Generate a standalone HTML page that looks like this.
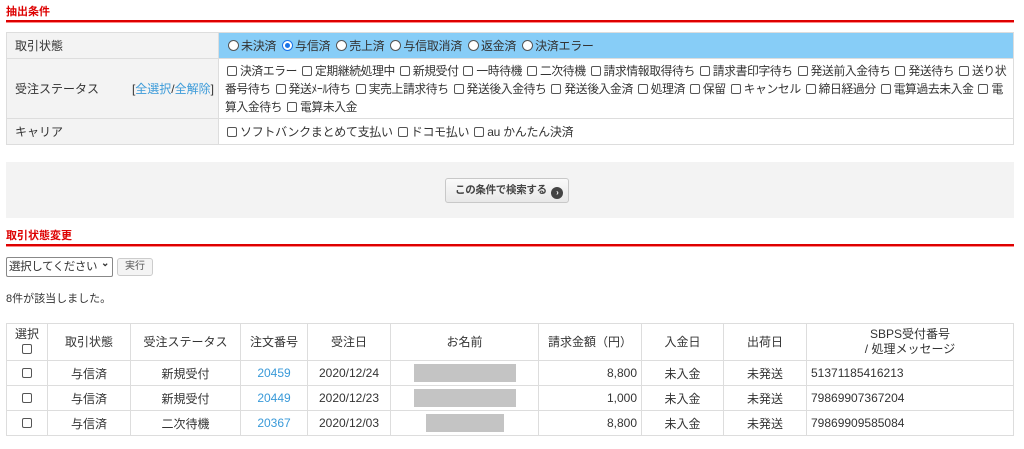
<!DOCTYPE html>
<html><head><meta charset="utf-8"><style>
*{box-sizing:border-box;margin:0;padding:0}
body{width:1024px;height:449px;background:#fff;font-family:"Liberation Sans","Noto Sans CJK JP",sans-serif;font-size:12px;color:#333;position:relative;overflow:hidden}
.abs{position:absolute}
.ttl{color:#d00;font-weight:bold;font-size:11px}
.rl{height:3px;background:#d00;left:6px;width:1008px;border-bottom:1px solid #f88}
table{border-collapse:collapse}
.f td{border:1px solid #ddd;vertical-align:middle;padding:0 6px;line-height:18px}
.f td.l{background:#f3f3f3;padding-left:8px}
.cb{display:inline-block;width:10px;height:10px;border:1px solid #555;border-radius:2px;margin:0 3px 0 2px;vertical-align:-1px;background:#fff}
.rd{display:inline-block;width:11px;height:11px;border:1px solid #555;border-radius:50%;margin:0 2px 0 3px;vertical-align:-1px;background:#fff;position:relative}
.rd.on{border-color:#1a73e8}
.rd.on:after{content:"";position:absolute;left:2px;top:2px;width:5px;height:5px;border-radius:50%;background:#1a73e8}
a{color:#3a9ad9;text-decoration:none}
.r td,.r th{border:1px solid #ddd;text-align:center;font-weight:normal;height:25px;padding:0 4px}
.r th{height:37px;line-height:15px}
.gr{display:inline-block;background:#c4c4c4;height:18px;vertical-align:middle}
.st{font-size:11.8px;letter-spacing:-0.38px;line-break:anywhere}
</style></head><body>
<div class="abs ttl" style="left:6px;top:3px">抽出条件</div>
<div class="abs rl" style="top:20px"></div>
<table class="f abs" style="left:6px;top:32px;width:1008px">
<tr style="height:26px"><td class="l" style="width:212px">取引状態</td><td style="background:#87cdf7;letter-spacing:-0.3px"><span class="rd"></span>未決済 <span class="rd on"></span>与信済 <span class="rd"></span>売上済 <span class="rd"></span>与信取消済 <span class="rd"></span>返金済 <span class="rd"></span>決済エラー</td></tr>
<tr style="height:60px"><td class="l">受注ステータス<span style="float:right;margin-right:-2px">[<a>全選択</a>/<a>全解除</a>]</span></td><td class="st"><span class="cb"></span>決済エラー <span class="cb"></span>定期継続処理中 <span class="cb"></span>新規受付 <span class="cb"></span>一時待機 <span class="cb"></span>二次待機 <span class="cb"></span>請求情報取得待ち <span class="cb"></span>請求書印字待ち <span class="cb"></span>発送前入金待ち <span class="cb"></span>発送待ち <span class="cb"></span>送り状番号待ち <span class="cb"></span>発送ﾒｰﾙ待ち <span class="cb"></span>実売上請求待ち <span class="cb"></span>発送後入金待ち <span class="cb"></span>発送後入金済 <span class="cb"></span>処理済 <span class="cb"></span>保留 <span class="cb"></span>キャンセル <span class="cb"></span>締日経過分 <span class="cb"></span>電算過去未入金 <span class="cb"></span>電算入金待ち <span class="cb"></span>電算未入金</td></tr>
<tr style="height:26px"><td class="l">キャリア</td><td style="letter-spacing:-0.3px"><span class="cb"></span>ソフトバンクまとめて支払い <span class="cb"></span>ドコモ払い <span class="cb"></span>au かんたん決済</td></tr>
</table>
<div class="abs" style="left:6px;top:162px;width:1008px;height:56px;background:#f3f3f3"></div>
<div class="abs" style="left:445px;top:178px;width:124px;height:25px;border:1px solid #c8c8c8;border-radius:3px;background:linear-gradient(#fafafa,#e8e8e8);font-size:10.5px;font-weight:bold;color:#444;line-height:23px;padding-left:9px;white-space:nowrap;letter-spacing:-0.3px">この条件で検索する <span style="display:inline-block;width:12px;height:12px;border-radius:50%;background:#444;color:#fff;font-size:8px;line-height:12px;text-align:center;vertical-align:-2px;margin-left:2px;letter-spacing:0">›</span></div>
<div class="abs ttl" style="left:6px;top:227px">取引状態変更</div>
<div class="abs rl" style="top:244px"></div>
<div class="abs" style="left:6px;top:257px;width:107px;height:20px;border:1px solid #888;border-radius:2px;line-height:18px;padding-left:2px;font-size:11.5px;white-space:nowrap;overflow:hidden;letter-spacing:-0.4px">選択してください<span style="position:absolute;right:3px;top:-3px;font-size:10px;font-weight:bold">&#x2304;</span></div>
<div class="abs" style="left:117px;top:258px;width:36px;height:18px;border:1px solid #ccc;border-radius:3px;background:#f4f4f4;font-size:10px;color:#555;text-align:center;line-height:16px">実行</div>
<div class="abs" style="left:6px;top:290px;font-size:11px">8件が該当しました。</div>
<table class="r abs" style="left:6px;top:323px;width:1008px">
<tr><th style="width:41px;padding:0">選択<br><span class="cb" style="margin:0"></span></th><th style="width:83px">取引状態</th><th style="width:110px">受注ステータス</th><th style="width:67px">注文番号</th><th style="width:83px">受注日</th><th style="width:148px">お名前</th><th style="width:103px">請求金額（円）</th><th style="width:82px">入金日</th><th style="width:83px">出荷日</th><th>SBPS受付番号<br>/ 処理メッセージ</th></tr>
<tr><td><span class="cb"></span></td><td>与信済</td><td>新規受付</td><td><a>20459</a></td><td>2020/12/24</td><td><span class="gr" style="width:102px"></span></td><td style="text-align:right">8,800</td><td>未入金</td><td>未発送</td><td style="text-align:left">51371185416213</td></tr>
<tr><td><span class="cb"></span></td><td>与信済</td><td>新規受付</td><td><a>20449</a></td><td>2020/12/23</td><td><span class="gr" style="width:102px"></span></td><td style="text-align:right">1,000</td><td>未入金</td><td>未発送</td><td style="text-align:left">79869907367204</td></tr>
<tr><td><span class="cb"></span></td><td>与信済</td><td>二次待機</td><td><a>20367</a></td><td>2020/12/03</td><td><span class="gr" style="width:78px"></span></td><td style="text-align:right">8,800</td><td>未入金</td><td>未発送</td><td style="text-align:left">79869909585084</td></tr>
</table>
</body></html>
